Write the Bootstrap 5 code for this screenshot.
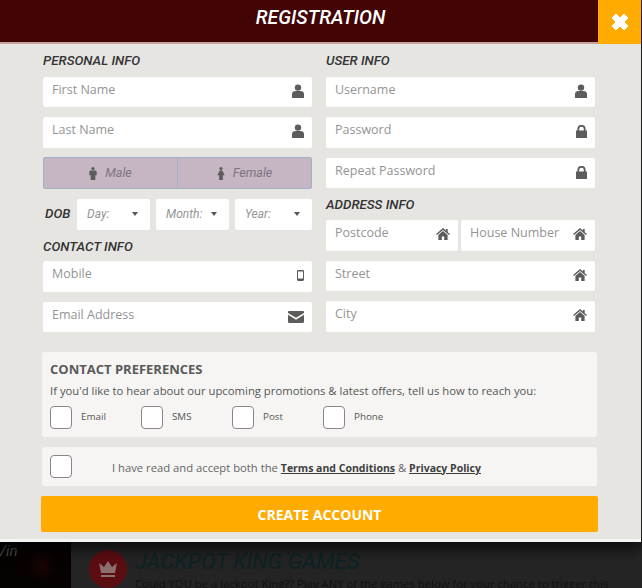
<!DOCTYPE html>
<html lang="en">
<head>
<meta charset="utf-8">
<title>Registration</title>
<link href="https://cdn.jsdelivr.net/npm/bootstrap@5.3.0/dist/css/bootstrap.min.css" rel="stylesheet">
<style>
html,body{height:100%;}
body{background:#2a2a2a;overflow:hidden;font-family:"Open Sans","Liberation Sans",sans-serif;}
.sym-defs{position:absolute;width:0;height:0;}
.reg-modal{width:641px;height:542px;background:#e6e5e2;border-bottom:3px solid #f5f5f3;box-shadow:0 6px 14px rgba(0,0,0,.7);position:relative;}
.reg-head{height:44px;background:#420404;border-bottom:2px solid #c9a49f;}
.reg-head h1{font-family:Roboto,"Liberation Sans",sans-serif;font-style:italic;font-weight:500;font-size:19.4px;color:#fff;margin:0;line-height:36px;}
.reg-close{width:43px;height:44px;background:#ffab00;color:#fff;border:0;padding:0;flex:none;}
.reg-title{flex:1;text-align:center;padding-left:43px;}
.reg-form{display:grid;grid-template-columns:269px 269px;column-gap:14px;margin:0 0 0 43px;padding-top:9px;}
.sec-title{font-family:Roboto,"Liberation Sans",sans-serif;font-style:italic;font-weight:500;font-size:13.3px;color:#333;margin:0;line-height:16px;height:23.5px;}
.sec-after{margin-top:8.5px;}
.sec-contact{margin-top:9px;height:22.5px;}
.fld{height:30.5px;background:#fff;border-radius:2px;padding:0 8px 0 9px;margin-bottom:10px;color:#949494;font-size:12.5px;line-height:26px;}
.fld svg{fill:#5c5c5a;flex:none;}
.ic-user{width:12px;height:14px;margin-top:7px;}
.ic-lock{width:11px;height:13px;margin-top:8px;}
.ic-home{width:14px;height:12px;margin-top:8px;}
.ic-phone{width:7px;height:11px;margin-top:9px;}
.ic-mail{width:16px;height:12px;margin-top:9px;}
.gender{height:32px;margin-top:-.5px;margin-bottom:10px;border:1px solid #9fb0c7;background:#c6b6c4;border-radius:2px;}
.gender>div{flex:1;color:#7d7480;font-family:Roboto,sans-serif;font-style:italic;font-size:12.5px;}
.gender>div+div{border-left:1px solid #9fb0c7;}
.gender svg{fill:#5c5c5a;width:8px;height:13px;}
.dob-row{column-gap:6px;}
.dob-label{font-family:Roboto,sans-serif;font-style:italic;font-weight:500;font-size:13.3px;color:#333;width:28px;flex:none;padding-left:2px;}
.dob-sel{height:30.5px;background:#fff;border-radius:2px;color:#949494;font-family:Roboto,sans-serif;font-style:italic;font-size:12px;padding:0 12px 0 10px;}
.dob-day{width:73px;}
.dob-month{width:73px;}
.dob-year{width:77px;}
.caret{width:0;height:0;border-left:3.5px solid transparent;border-right:3.5px solid transparent;border-top:4px solid #555;}
.addr-row{column-gap:3px;}
.addr-a{width:132px;}
.addr-b{width:134px;}
.pref-box{background:#f6f5f3;border-radius:3px;margin:0 44px 0 42px;padding:0 8px;color:#5a5a5a;}
.pref-one{height:85px;margin-top:20px;padding-top:8px;}
.pref-one h2{font-size:13px;font-weight:700;color:#5a5a5a;margin:0 0 1.5px;line-height:19px;}
.pref-one p{font-size:11.3px;margin:0;line-height:20px;color:#555;}
.chk{width:22px;height:23px;border:1px solid #8d8388;border-radius:4px;background:#fff;flex:none;}
.chk-row{margin-top:5px;}
.chk-item{width:91px;font-size:9.8px;color:#555;gap:9px;}
.pref-two{height:39px;margin-top:10px;font-size:11.25px;color:#666;padding-left:8px;}
.pref-two a{color:#3d3d3d;font-weight:700;font-size:10.5px;}
.pref-two .txt{margin-left:40px;padding-top:3px;}
.go{display:block;margin:9.5px 43px 0 41px;width:557px;height:36px;background:#ffab00;color:#fff;border:0;border-radius:2px;font-weight:700;font-size:14px;padding:1px 0 0;}
.under{height:46px;background:#242424;}
.under-left{width:71px;flex:none;background:radial-gradient(circle at 42px 24px,#1a0404 0,#060202 16px);color:#4a4a4a;font-family:Roboto,sans-serif;font-style:italic;font-size:15px;line-height:16px;padding-top:1px;}
.under-main{padding-left:18px;}
.crown{width:38px;height:38px;border-radius:50%;background:#5c0d12;flex:none;margin-top:8px;}
.under h3{font-family:Roboto,sans-serif;font-style:italic;font-size:22px;font-weight:400;margin:0;line-height:26px;color:#0d2224;padding-top:7px;}
.under p{font-size:11.3px;margin:2px 0 0;color:#111;line-height:14px;white-space:nowrap;}
</style>
</head>
<body>
<svg class="sym-defs">
<defs>
<symbol id="i-user" viewBox="0 0 12 14"><circle cx="6" cy="3.6" r="3.2"/><path d="M0 14V9.800C0 8 1.600 6.900 3.400 6.900h5.200c1.800 0 3.400 1.100 3.400 2.900V14z"/></symbol>
<symbol id="i-lock" viewBox="0 0 11 13"><path d="M0 5.500h1.400V4a4.100 4.100 0 0 1 8.200 0v1.500H11V13H0zM3.200 5.500h4.600V4a2.300 2.300 0 0 0-4.600 0z"/></symbol>
<symbol id="i-home" viewBox="0 0 15 13"><path d="M7.500 0 10.600 2.700V1h2v3.500L15 6.600 14 7.700 7.500 2.100 1 7.700 0 6.600z"/><path d="M2.500 7.600 7.500 3.300l5 4.300V13H8.800V9.300H6.200V13H2.500z"/></symbol>
<symbol id="i-mail" viewBox="0 0 16 12"><path d="M0 1.200C0 .5.500 0 1.200 0h13.600c.7 0 1.200.5 1.200 1.200v.7L8 6.800 0 1.900z"/><path d="M0 3.800 8 8.700 16 3.800v7c0 .7-.5 1.200-1.200 1.200H1.200C.5 12 0 11.500 0 10.800z"/></symbol>
<symbol id="i-phone" viewBox="0 0 7 11"><path fill-rule="evenodd" d="M1.200 0h4.600C6.500 0 7 .5 7 1.200v8.600c0 .7-.5 1.200-1.200 1.200H1.200C.5 11 0 10.500 0 9.800V1.200C0 .5.500 0 1.200 0zM1 1.500V8.500H6V1.500z"/></symbol>
<symbol id="i-male" viewBox="0 0 8 14"><circle cx="4" cy="1.700" r="1.700"/><path d="M1.800 3.900h4.400C7.200 3.900 8 4.600 8 5.600V9H6.500v5h-5V9H0V5.600C0 4.600.8 3.900 1.800 3.900z"/></symbol>
<symbol id="i-female" viewBox="0 0 8 14"><circle cx="4" cy="1.700" r="1.700"/><path d="M2.600 3.900h2.800L8 9H6v5H2V9H0z"/></symbol>
</defs>
</svg>

<div class="reg-modal">
  <div class="reg-head d-flex">
    <div class="reg-title"><h1>REGISTRATION</h1></div>
    <button class="reg-close d-flex align-items-center justify-content-center" type="button" aria-label="Close">
      <svg width="18" height="18" viewBox="0 0 18 18"><path d="M1 5l4-4 4 4 4-4 4 4-4 4 4 4-4 4-4-4-4 4-4-4 4-4z" fill="#fff" stroke="#fff" stroke-width="1" stroke-linejoin="round"/></svg>
    </button>
  </div>
  <form class="reg-form">
    <div>
      <h2 class="sec-title">PERSONAL INFO</h2>
      <div class="fld d-flex justify-content-between"><span>First Name</span><svg class="ic-user"><use href="#i-user"/></svg></div>
      <div class="fld d-flex justify-content-between"><span>Last Name</span><svg class="ic-user"><use href="#i-user"/></svg></div>
      <div class="gender d-flex">
        <div class="d-flex align-items-center justify-content-center gap-2"><svg><use href="#i-male"/></svg><span>Male</span></div>
        <div class="d-flex align-items-center justify-content-center gap-2"><svg><use href="#i-female"/></svg><span>Female</span></div>
      </div>
      <div class="d-flex align-items-center dob-row">
        <div class="dob-label">DOB</div>
        <div class="dob-sel dob-day d-flex align-items-center justify-content-between"><span>Day:</span><i class="caret"></i></div>
        <div class="dob-sel dob-month d-flex align-items-center justify-content-between"><span>Month:</span><i class="caret"></i></div>
        <div class="dob-sel dob-year d-flex align-items-center justify-content-between"><span>Year:</span><i class="caret"></i></div>
      </div>
      <h2 class="sec-title sec-contact">CONTACT INFO</h2>
      <div class="fld d-flex justify-content-between"><span>Mobile</span><svg class="ic-phone"><use href="#i-phone"/></svg></div>
      <div class="fld d-flex justify-content-between mb-0"><span>Email Address</span><svg class="ic-mail"><use href="#i-mail"/></svg></div>
    </div>
    <div>
      <h2 class="sec-title">USER INFO</h2>
      <div class="fld d-flex justify-content-between"><span>Username</span><svg class="ic-user"><use href="#i-user"/></svg></div>
      <div class="fld d-flex justify-content-between"><span>Password</span><svg class="ic-lock"><use href="#i-lock"/></svg></div>
      <div class="fld d-flex justify-content-between mb-0"><span>Repeat Password</span><svg class="ic-lock"><use href="#i-lock"/></svg></div>
      <h2 class="sec-title sec-after">ADDRESS INFO</h2>
      <div class="d-flex addr-row">
        <div class="fld addr-a d-flex justify-content-between"><span>Postcode</span><svg class="ic-home"><use href="#i-home"/></svg></div>
        <div class="fld addr-b d-flex justify-content-between"><span>House Number</span><svg class="ic-home"><use href="#i-home"/></svg></div>
      </div>
      <div class="fld d-flex justify-content-between"><span>Street</span><svg class="ic-home"><use href="#i-home"/></svg></div>
      <div class="fld d-flex justify-content-between mb-0"><span>City</span><svg class="ic-home"><use href="#i-home"/></svg></div>
    </div>
  </form>
  <div class="pref-box pref-one">
    <h2>CONTACT PREFERENCES</h2>
    <p>If you'd like to hear about our upcoming promotions &amp; latest offers, tell us how to reach you:</p>
    <div class="d-flex chk-row">
      <div class="chk-item d-flex align-items-center"><span class="chk"></span><span>Email</span></div>
      <div class="chk-item d-flex align-items-center"><span class="chk"></span><span>SMS</span></div>
      <div class="chk-item d-flex align-items-center"><span class="chk"></span><span>Post</span></div>
      <div class="chk-item d-flex align-items-center"><span class="chk"></span><span>Phone</span></div>
    </div>
  </div>
  <div class="pref-box pref-two d-flex align-items-center">
    <span class="chk"></span>
    <span class="txt">I have read and accept both the <a href="#">Terms and Conditions</a> &amp; <a href="#">Privacy Policy</a></span>
  </div>
  <button class="go" type="button">CREATE ACCOUNT</button>
</div>
<div class="under d-flex">
  <div class="under-left">/in</div>
  <div class="under-main d-flex gap-2">
    <div class="crown d-flex align-items-center justify-content-center">
      <svg width="20" height="18" viewBox="0 0 20 18"><path d="M1 3l5 4 4-6 4 6 5-4-2 10H3z" fill="#8c6f6f"/><path d="M3 15h14v2H3z" fill="#8c6f6f"/></svg>
    </div>
    <div>
      <h3>JACKPOT KING GAMES</h3>
      <p>Could YOU be a Jackpot King?? Play ANY of the games below for your chance to trigger this</p>
    </div>
  </div>
</div>
</body>
</html>
